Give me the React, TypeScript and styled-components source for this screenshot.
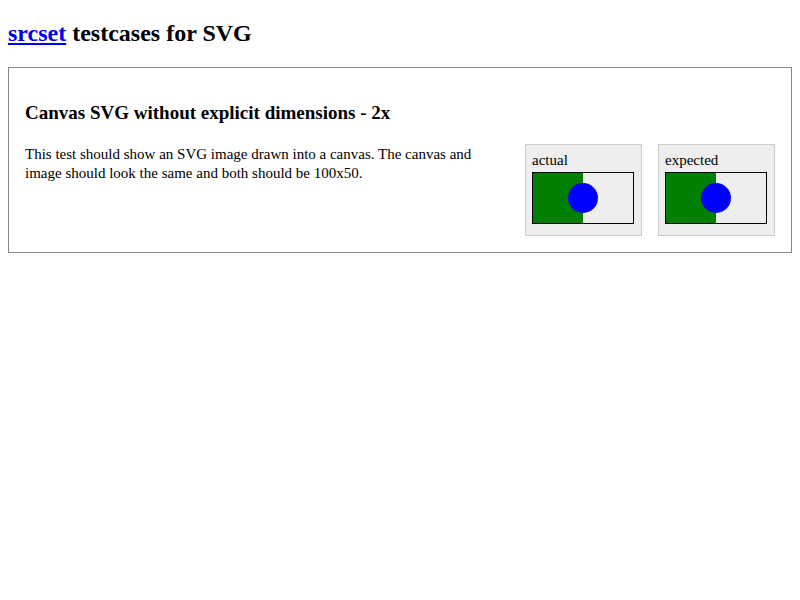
import React from "react";
import styled, { createGlobalStyle } from "styled-components";

const GlobalStyle = createGlobalStyle`
	body {
		margin: 0 8px 8px;
		font-family: "Liberation Serif", "Times New Roman", serif;
		font-size: 15px;
		color: #000;
		background: #fff;
	}
`;

const PageTitle = styled.h2`
	font-size: 24px;
	font-weight: 700;
	margin: 0;
	padding: 19.92px 0;
	line-height: 27px;

	a {
		color: #0000ee;
		text-decoration: underline;
	}
`;

const TestCase = styled.section`
	border: 1px solid #888;
	padding: 16px;
`;

const CaseTitle = styled.h3`
	font-size: 19px;
	font-weight: 700;
	line-height: 22px;
	margin: 18px 0 20px;
`;

const CaseBody = styled.div`
	display: flex;
	align-items: flex-start;
`;

const Description = styled.p`
	flex: 1;
	margin: 0 24px 0 0;
	padding-top: 1px;
	line-height: 19px;
`;

const Figures = styled.div`
	display: flex;
	gap: 16px;
`;

const Figure = styled.div`
	width: 117px;
	box-sizing: border-box;
	background: #eee;
	border: 1px solid #ccc;
	padding: 6px 6px 11px;
`;

const Label = styled.div`
	line-height: 18px;
	height: 18px;
`;

const Canvas = styled.svg`
	display: block;
	margin-top: 3px;
	width: 100px;
	height: 50px;
	border: 1px solid #000;
	background: #eee;
`;

const Drawing: React.FC = () => (
	<Canvas viewBox="0 0 100 50">
		<rect x="0" y="0" width="50" height="50" fill="#008000" />
		<circle cx="50" cy="25" r="15" fill="#0000ff" />
	</Canvas>
);

export default function App() {
	return (
		<>
			<GlobalStyle />
			<PageTitle>
				<a href="#">srcset</a> testcases for SVG
			</PageTitle>
			<TestCase>
				<CaseTitle>Canvas SVG without explicit dimensions - 2x</CaseTitle>
				<CaseBody>
					<Description>
						This test should show an SVG image drawn into a canvas. The canvas
						and image should look the same and both should be 100x50.
					</Description>
					<Figures>
						<Figure>
							<Label>actual</Label>
							<Drawing />
						</Figure>
						<Figure>
							<Label>expected</Label>
							<Drawing />
						</Figure>
					</Figures>
				</CaseBody>
			</TestCase>
		</>
	);
}
